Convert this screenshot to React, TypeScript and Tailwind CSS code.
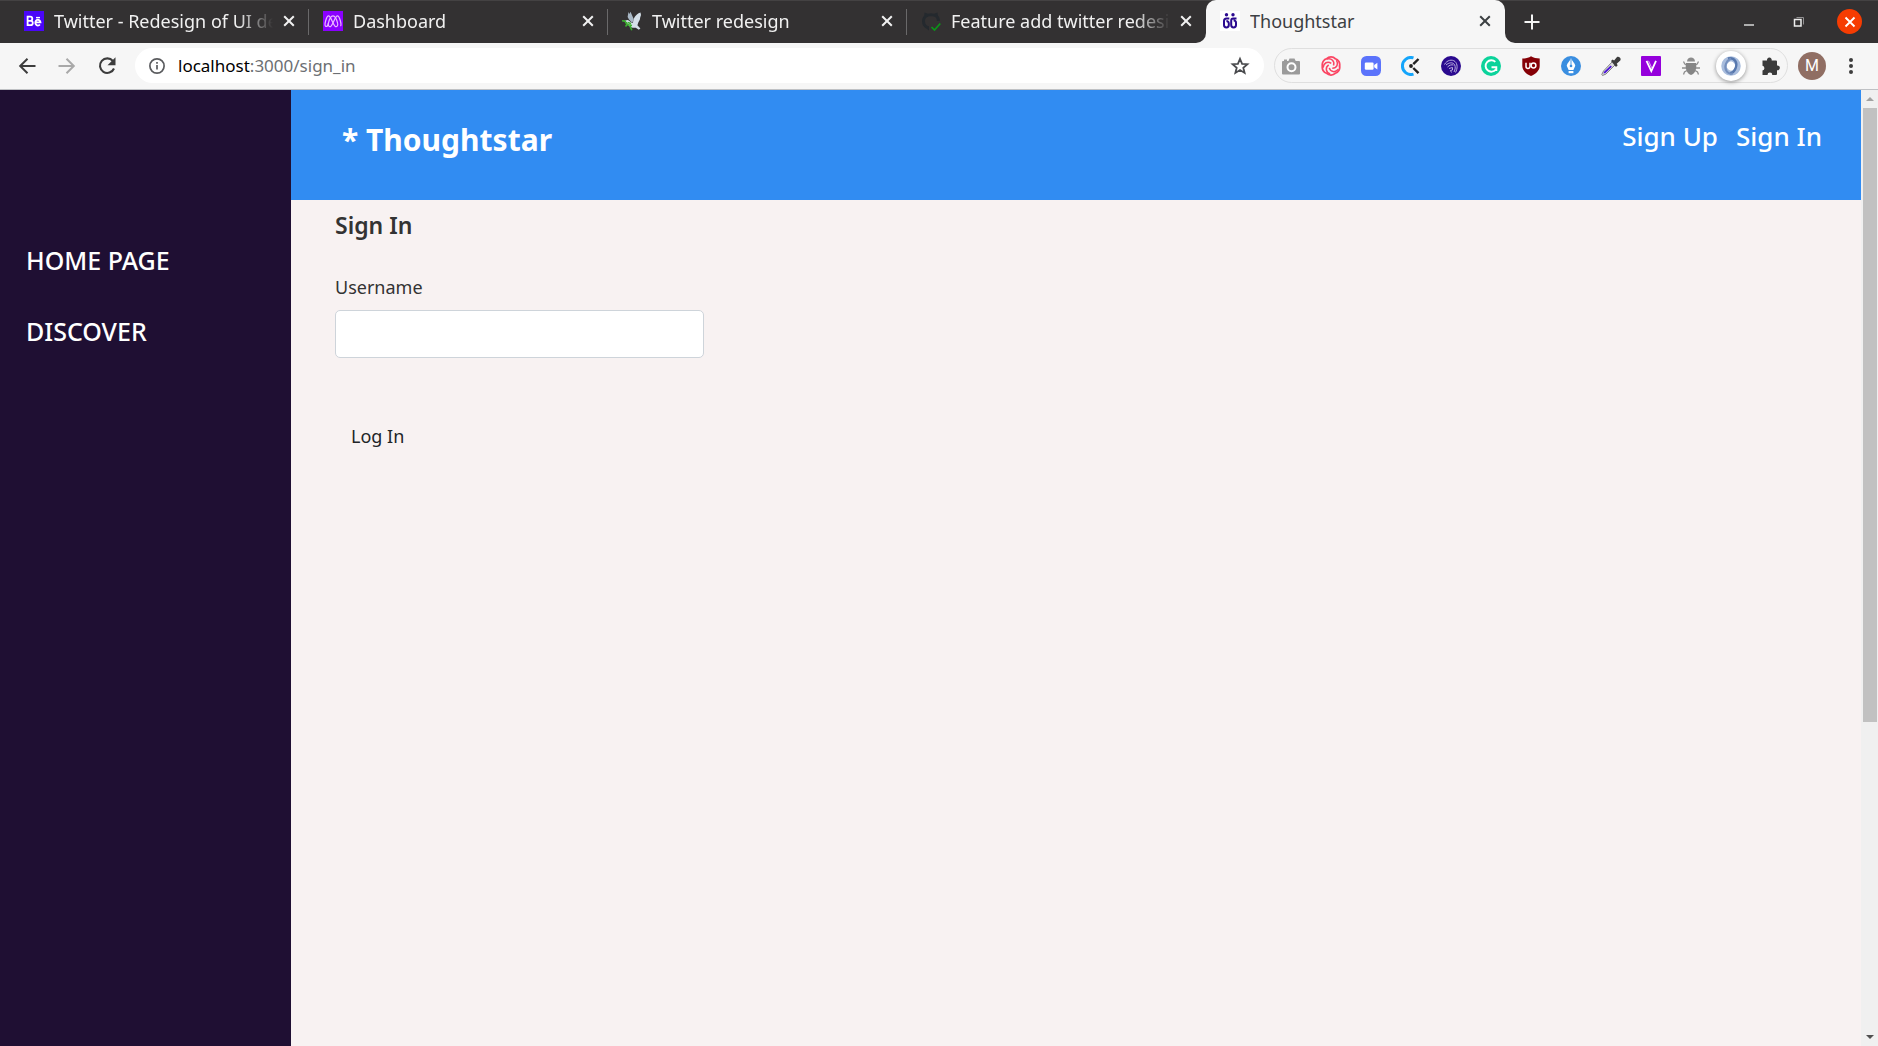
import type { ReactNode } from "react";

function BehanceIcon() {
  return (
    <svg viewBox="0 0 20 20" className="size-5">
      <rect width="20" height="20" fill="#4a06f8" />
      <g fill="none" stroke="#fff" strokeWidth="1.8">
        <path d="M3.6 5.6h2.6a1.9 1.9 0 0 1 0 4.2H3.6zM3.6 9.8h3a2.1 2.1 0 0 1 0 4.4h-3z" />
        <path d="M11.3 11.4h5.2a2.6 2.9 0 1 0-.6 2.1" />
        <path d="M12 6.6h4" strokeWidth="1.4" />
      </g>
    </svg>
  );
}

function DashboardIcon() {
  return (
    <svg viewBox="0 0 20 20" className="size-5">
      <rect width="20" height="20" fill="#8a00ff" />
      <g fill="none" stroke="#e9b8ff" strokeWidth="1.2">
        <path d="M2.5 15.2c-1.4-1.4 1-10.4 3.1-10.4 2 0 4.4 8.300 6.400 10.400 1.600 1.200 3.300-.3 2.600-3C13.900 9.200 12.200 4.800 10 4.800c-2.200 0-4 4.600-4.600 7.400-.6 2.700-1.400 3.800-2.900 3z" />
        <path d="M17.500 15.200c1.400-1.400-1-10.400-3.100-10.400-2 0-4.400 8.300-6.400 10.400-1.600 1.200-3.300-.3-2.600-3" />
      </g>
    </svg>
  );
}

function DoveIcon() {
  return (
    <svg viewBox="0 0 20 20" className="size-5">
      <path d="M6.500 1l1 2 1-2.200 3.200 7.200-1.400 4L7 8.500 5.600 6z" fill="#a9b8c6" />
      <path d="M11 12c.2-4 1.800-8.500 7.500-10.500L19 4l-.8 2.500-.4 2.200-1.400 2.500-1 3 3 3.300-1.600 1.200-3-2C9.500 17.500 6 15 4.800 11.500L2.500 9.800 5.500 9c2 .2 3 3 5.500 3z" fill="#d5e0ea" />
      <g fill="none" stroke="#3bb02e" strokeWidth="1.6">
        <path d="M0 9.800l3 .3 2 3.400 5 1M5 13.500l-1.500 2M7.500 14l2.300 5.200M5.500 11.500l3.500 1" />
      </g>
    </svg>
  );
}

function GithubIcon() {
  return (
    <svg viewBox="0 0 20 20" className="size-5">
      <path d="M6 18C2.500 16.500 1 13.500 1 10.500 1 7.500 2.300 5.500 3.300 4.600L3.500 1.500l3.500 1.300a11 11 0 0 1 6 0l3.500-1.300.4 3.100c1.300 1.300 2 3 2 5.400h-3c0-3.400-2-4.800-5.900-4.800s-6 1.600-6 5c0 3 1.500 4.500 4 5v4.300z" fill="#24292e" />
      <path d="M10.500 16l3 3L19.300 12.500" fill="none" stroke="#0b9618" strokeWidth="1.700" />
    </svg>
  );
}

function ThoughtstarIcon() {
  return (
    <svg viewBox="0 0 20 20" className="size-5">
      <rect width="20" height="20" fill="#fff" />
      <g fill="none" stroke="#2b0a8f" strokeWidth="2">
        <path d="M9.300 7.500H6.500A2.500 2.500 0 0 0 4 10v4a2.400 2.400 0 0 0 4.800 0v-1.500a2.400 2.400 0 0 0-2.400-2.400" />
        <path d="M16.500 7.500h-3.300a2 2 0 0 0-2 2v4.500a2.400 2.400 0 0 0 4.800 0v-2.300a2.200 2.200 0 0 0-2.400-2.200" />
      </g>
      <g fill="#2b0a8f">
        <circle cx="6.500" cy="3.700" r="1.700" />
        <circle cx="13" cy="3.700" r="1.700" />
      </g>
    </svg>
  );
}

function CloseGlyph() {
  return (
    <svg viewBox="0 0 12 12" className="size-3" fill="none" stroke="currentColor" strokeWidth="2">
      <path d="M1.200 1.200l9.600 9.600M10.800 1.200l-9.600 9.600" />
    </svg>
  );
}

type TabProps = { icon: ReactNode; title: string; active?: boolean; divider?: boolean };

function BrowserTab({ icon, title, active, divider }: TabProps) {
  return (
    <div
      className={
        active
          ? "relative flex h-[43px] min-w-0 flex-1 items-center rounded-t-[10px] bg-[#f6f6f6] pl-[14px] pr-2 pb-px text-[#3c4043] max-w-[299px]"
          : "relative flex h-[43px] min-w-0 flex-1 items-center pl-[14px] pr-2 pb-px text-[#f1f1f1] max-w-[299px]"
      }
    >
      <span className="shrink-0">{icon}</span>
      <button
        className={
          active
            ? "ml-[10px] h-7 min-w-0 flex-1 overflow-hidden text-left text-[18px] leading-7 whitespace-nowrap"
            : "ml-[10px] h-7 min-w-0 flex-1 overflow-hidden text-left text-[18px] leading-7 whitespace-nowrap [mask-image:linear-gradient(to_right,#000_84%,transparent)]"
        }
      >
        {title}
      </button>
      <button aria-label={`Close ${title}`} className="ml-1 flex size-6 shrink-0 items-center justify-center">
        <CloseGlyph />
      </button>
      {divider && <span className="absolute right-0 top-[9px] h-[26px] w-px bg-[#6a696a]" />}
      {active && (
        <>
          <span className="absolute bottom-0 right-full size-[10px] bg-[#f6f6f6]">
            <span className="block size-full rounded-br-[10px] bg-[#333132]" />
          </span>
          <span className="absolute bottom-0 left-full size-[10px] bg-[#f6f6f6]">
            <span className="block size-full rounded-bl-[10px] bg-[#333132]" />
          </span>
        </>
      )}
    </div>
  );
}

function TabStrip() {
  return (
    <div className="flex h-[43px] items-center bg-[#333132] pl-[10px] shadow-[inset_0_1px_0_#444243]">
      <div className="flex min-w-0 flex-1">
        <BrowserTab icon={<BehanceIcon />} title="Twitter - Redesign of UI details" divider />
        <BrowserTab icon={<DashboardIcon />} title="Dashboard" divider />
        <BrowserTab icon={<DoveIcon />} title="Twitter redesign" divider />
        <BrowserTab icon={<GithubIcon />} title="Feature add twitter redesign" />
        <BrowserTab icon={<ThoughtstarIcon />} title="Thoughtstar" active />
        <button aria-label="New tab" className="ml-[15px] flex w-6 shrink-0 items-center justify-center text-[#f5f5f5]">
          <svg viewBox="0 0 16 16" className="size-4" fill="none" stroke="currentColor" strokeWidth="2">
            <path d="M8 .5v15M.5 8h15" />
          </svg>
        </button>
      </div>
      <div className="flex shrink-0 items-center gap-[26px] pr-4 text-[#d8d8d8]">
        <button aria-label="Minimize" className="flex size-6 items-center justify-center">
          <svg viewBox="0 0 24 24" className="size-6">
            <path d="M7 15h10" stroke="currentColor" strokeWidth="1.500" />
          </svg>
        </button>
        <button aria-label="Restore" className="flex size-6 items-center justify-center">
          <svg viewBox="0 0 24 24" className="size-6" fill="none">
            <path d="M9.500 7.500h7v7" stroke="#929192" />
            <rect x="7.500" y="9.500" width="6.500" height="6.500" stroke="#eee" strokeWidth="1.500" />
          </svg>
        </button>
        <button aria-label="Close window" className="flex size-[25px] items-center justify-center rounded-full bg-[#f63c02] text-white">
          <svg viewBox="0 0 12 12" className="size-3" fill="none" stroke="currentColor" strokeWidth="1.900">
            <path d="M1.500 1.500l9 9M10.500 1.500l-9 9" />
          </svg>
        </button>
      </div>
    </div>
  );
}

const extensions: { name: string; icon: ReactNode; raised?: boolean }[] = [
  {
    name: "Screenshot",
    icon: (
      <>
        <path d="M3 3.500h3v1.500h1.500l1-2.500h5l1.200 2.500H18a1 1 0 0 1 1 1v11.500a1 1 0 0 1-1 1H2a1 1 0 0 1-1-1V6a1 1 0 0 1 1-1h1z" fill="#9b9b9b" />
        <circle cx="10.500" cy="11.200" r="4" fill="none" stroke="#fff" strokeWidth="2" />
      </>
    ),
  },
  {
    name: "Loom",
    icon: (
      <g fill="none" stroke="#fb4563" strokeWidth="1.800">
        {[0, 60, 120, 180, 240, 300].map((angle) => (
          <path key={angle} d="M5.600 2.800C8 .2 12.200.4 14.400 2.800" transform={`rotate(${angle} 10 10)`} />
        ))}
        {[0, 72, 144, 216, 288].map((angle) => (
          <path key={angle} d="M6 3C10.500 2 14 5 12.500 9.500" transform={`rotate(${angle} 10 10)`} strokeWidth="1.500" />
        ))}
      </g>
    ),
  },
  {
    name: "Zoom",
    icon: (
      <>
        <rect width="20" height="20" rx="5.500" fill="#5b73fb" />
        <rect x="3.800" y="6.500" width="8.800" height="7.200" rx="1.200" fill="#fff" />
        <path d="M13.200 9l3.200-2.300v6.800L13.200 11.200z" fill="#fff" />
      </>
    ),
  },
  {
    name: "Clockify",
    icon: (
      <>
        <path d="M12.500 1.900A8.500 8.500 0 1 0 12.500 18.100" fill="none" stroke="#14a5fb" strokeWidth="3" />
        <circle cx="10" cy="10" r="1.900" fill="#222" />
        <path d="M12.300 8.200l5.200-5.200M12.300 12l5.200 5.200" stroke="#222" strokeWidth="2.400" />
      </>
    ),
  },
  {
    name: "Spartan",
    icon: (
      <>
        <circle cx="10" cy="10" r="10" fill="#2b0a8f" />
        <path d="M3.500 8.500C6 4 11 3 14 5.500c2.700 2.500 2.700 7 .5 11M5 9c3-2.500 6.500-3 8.500-.5 1.200 2.200.8 5-.5 7.500M6.500 11c2-2 4-2.500 6-2M8 12.500l3.500-1v2.500l-2 .5 1 2" fill="none" stroke="#b9aee0" strokeWidth="1" />
      </>
    ),
  },
  {
    name: "Grammarly",
    icon: (
      <>
        <circle cx="10" cy="10" r="10" fill="#0bd39b" />
        <path d="M14.300 5.900A5.700 5.700 0 1 0 14.800 13.500M10.500 11.200h4.800v3.800" fill="none" stroke="#fff" strokeWidth="1.900" />
      </>
    ),
  },
  {
    name: "uBlock Origin",
    icon: (
      <>
        <path d="M10 .3c2.500 1.700 5.500 2.200 8.700 2.200v7.500c0 4.500-4 8-8.700 10-4.700-2-8.700-5.500-8.700-10V2.500C4.500 2.500 7.500 2 10 .3z" fill="#850006" />
        <path d="M5 6.700v3.500a1.700 1.700 0 0 0 4 .5V6.700" fill="none" stroke="#fff" strokeWidth="1.500" />
        <circle cx="12.500" cy="9.500" r="2.400" fill="none" stroke="#fff" strokeWidth="1.500" />
      </>
    ),
  },
  {
    name: "Pen",
    icon: (
      <>
        <circle cx="10" cy="10" r="10" fill="#3a8ee0" />
        <path d="M10 2.200c.8 2.400 4 4.800 4.300 7.500L12.400 14H7.600L5.700 9.700C6 7 9.200 4.600 10 2.200z" fill="#fff" />
        <path d="M7.600 15h4.800v2.200H7.600z" fill="#fff" />
        <path d="M10 3v6.500" stroke="#3a8ee0" strokeWidth=".9" />
        <circle cx="10" cy="10" r="1.300" fill="#3a8ee0" />
      </>
    ),
  },
  {
    name: "Color picker",
    icon: (
      <>
        <path d="M11.500 5.500l3 3L5 18l-3.500 1.500L.8 18.500 2.500 15z" fill="#dcdcdc" stroke="#77777a" strokeWidth=".9" />
        <path d="M9.700 9.500l1.200 1.200L4.500 17l-2 .6.600-1.800z" fill="#4a12d8" />
        <path d="M10 5l1.600-1.600 1.500 1.200L16 1c1.500-1.200 4.700 1 3.300 3.500L15.700 7.700l1 1.600L15 11z" fill="#3d3d3d" />
      </>
    ),
  },
  {
    name: "Vidyard",
    icon: (
      <>
        <rect width="20" height="20" rx="1" fill="#9500dc" />
        <path d="M5.500 4.800l4.800 10.400L15 4.800" fill="none" stroke="#fff" strokeWidth="1.800" />
        <path d="M7.500 4.800l3.200 7" stroke="#e4b5f8" strokeWidth=".9" />
      </>
    ),
  },
  {
    name: "Debugger",
    icon: (
      <>
        <g fill="none" stroke="#8f8f8f" strokeWidth="1.300">
          <path d="M6 9L3.800 8 2.500 5.500M5.500 12H1M6 14.500L3.500 16 2.500 18.500M14 9l2.200-1 1.300-2.500M14.500 12H19M14 14.500l2.500 1.500 1 2.500" />
        </g>
        <path d="M6 5.500C6 3 8 1.500 10 1.500s4 1.500 4 4z" fill="#8c8c8c" />
        <path d="M5 7h10c1 4-.3 11-5 12C5.300 18 4 11 5 7z" fill="#858585" />
      </>
    ),
  },
  {
    name: "JSON Formatter",
    raised: true,
    icon: (
      <>
        <circle cx="10" cy="10" r="7" fill="none" stroke="#a9bddd" strokeWidth="5.500" />
        <path d="M7 2.500C13.500 1 17 6.500 14.500 12.500 13.500 15 11 17 9 17.500" fill="none" stroke="#5878ad" strokeWidth="2.400" />
        <path d="M12 17.500C6 18.500 3 13 5 7.500 6 5 8 3.500 10 2.500" fill="none" stroke="#7590be" strokeWidth="2" />
        <ellipse cx="10" cy="10" rx="3" ry="4.500" fill="#fff" />
      </>
    ),
  },
  {
    name: "Extensions",
    icon: (
      <path d="M1.500 4.500H6a2.400 2.400 0 1 1 4.700 0H15a1 1 0 0 1 1 1v4a2.400 2.400 0 1 1 0 4.700V18a1 1 0 0 1-1 1h-3.700a2.400 2.400 0 0 0-4.800 0H1.500v-4.500a2.400 2.400 0 0 0 0-4.700z" fill="#3b3b3b" />
    ),
  },
];

function Toolbar() {
  return (
    <div className="flex h-[47px] items-center border-b border-[#bfc1c4] bg-[#f6f6f6] pb-px pl-[17px] pr-[17px]">
      <div className="flex items-center gap-5 text-[#3d3d3d]">
        <button aria-label="Back">
          <svg viewBox="0 0 20 20" className="size-5" fill="none" stroke="currentColor" strokeWidth="2">
            <path d="M18.500 10H3.500M10.500 2.700L3.200 10l7.300 7.300" />
          </svg>
        </button>
        <button aria-label="Forward" className="text-[#a9a9a9]">
          <svg viewBox="0 0 20 20" className="size-5" fill="none" stroke="currentColor" strokeWidth="2">
            <path d="M1.500 10h15M9.500 2.700l7.300 7.300-7.300 7.300" />
          </svg>
        </button>
        <button aria-label="Reload">
          <svg viewBox="0 0 20 20" className="size-5">
            <path d="M15.900 5A7.300 7.300 0 1 0 17 12.500" fill="none" stroke="currentColor" strokeWidth="2.100" />
            <path d="M18.500 1.300v8h-8z" fill="currentColor" />
          </svg>
        </button>
      </div>
      <div className="ml-[18px] flex h-[35px] min-w-0 flex-1 items-center rounded-full bg-white pl-[14px] pr-[14px]">
        <button aria-label="Site information" className="shrink-0">
          <svg viewBox="0 0 18 18" className="size-4" fill="none" stroke="#5a5b5e" strokeWidth="1.900">
            <circle cx="9" cy="9" r="8" />
            <path d="M9 8v5M9 4.500v2" />
          </svg>
        </button>
        <button aria-label="Address bar" className="ml-[13px] min-w-0 flex-1 text-left text-[17px] leading-6 text-[#6c6f73]">
          <span className="text-black">localhost</span>:3000/sign_in
        </button>
        <button aria-label="Bookmark this page" className="shrink-0">
          <svg viewBox="0 0 20 20" className="size-5" fill="none" stroke="#4a4b4e" strokeWidth="1.800">
            <path d="M10 2.800l2.100 5 5.300.4-4.100 3.500 1.300 5.200L10 14.100 5.400 16.900l1.300-5.200L2.600 8.200l5.300-.4z" />
          </svg>
        </button>
      </div>
      <div className="ml-[10px] flex h-[35px] shrink-0 items-center gap-5 rounded-full border border-[#dfdfdf] px-[6px]">
        {extensions.map((ext) => (
          <button
            key={ext.name}
            aria-label={ext.name}
            className={
              ext.raised
                ? "-m-[5px] rounded-full bg-white p-[5px] shadow-[0_1px_4px_rgba(0,0,0,0.4)]"
                : "rounded-sm"
            }
          >
            <svg viewBox="0 0 20 20" className="size-5">
              {ext.icon}
            </svg>
          </button>
        ))}
      </div>
      <button aria-label="Profile" className="ml-[10px] size-7 shrink-0 rounded-full bg-[#906e63] font-['Roboto',sans-serif] text-[16px] leading-7 text-white">
        M
      </button>
      <button aria-label="Menu" className="ml-[15px] shrink-0">
        <svg viewBox="0 0 20 20" className="size-5" fill="#3d3d3d">
          <circle cx="10" cy="4" r="2" />
          <circle cx="10" cy="10" r="2" />
          <circle cx="10" cy="16" r="2" />
        </svg>
      </button>
    </div>
  );
}

function Scrollbar() {
  return (
    <div className="flex w-[17px] shrink-0 flex-col items-center bg-[#f0f0f0] px-px">
      <div className="flex h-[18px] shrink-0 items-center">
        <svg viewBox="0 0 8 4" className="h-1 w-2">
          <path d="M0 4l4-4 4 4z" fill="#a2a2a2" />
        </svg>
      </div>
      <div className="w-[14px] flex-[614] bg-[#c1c1c1]" />
      <div className="flex-[306]" />
      <div className="flex h-[18px] shrink-0 items-center">
        <svg viewBox="0 0 8 4" className="h-1 w-2">
          <path d="M0 0l4 4 4-4z" fill="#505050" />
        </svg>
      </div>
    </div>
  );
}

export default function App() {
  return (
    <div className="flex h-screen flex-col overflow-hidden font-['Noto_Sans',sans-serif]">
      <TabStrip />
      <Toolbar />
      <div className="flex min-h-0 flex-1">
        <nav className="flex w-[291px] shrink-0 flex-col bg-[#1f0f33] pt-[135px] text-[25px] leading-[71px] font-medium text-white">
          <a href="#home" className="px-[26px]">HOME PAGE</a>
          <a href="#discover" className="px-[26px]">DISCOVER</a>
        </nav>
        <div className="flex min-w-0 flex-1 flex-col bg-[#f8f2f2]">
          <header className="flex h-[110px] shrink-0 items-start justify-between bg-[#318cf2] pr-[39px] pl-[51px] text-white">
            <a href="#top" className="mt-[26px] text-[30px] leading-[48px] font-bold">* Thoughtstar</a>
            <div className="mt-[26px] flex gap-[18px] text-[26px] leading-10 font-medium">
              <a href="#sign-up">Sign Up</a>
              <a href="#sign-in">Sign In</a>
            </div>
          </header>
          <main className="px-11 pt-[9px] text-[#333]">
            <h1 className="text-[23px] leading-8 font-semibold">Sign In</h1>
            <form className="mt-8 flex flex-col items-start">
              <label htmlFor="username" className="text-[18px] leading-7">Username</label>
              <input
                id="username"
                type="text"
                className="mt-[9px] h-12 w-[369px] rounded-[5px] border border-[#ced4da] bg-white px-4 text-[18px] outline-none"
              />
              <button type="button" className="mt-[54px] h-12 px-4 text-[18px] text-[#212529]">
                Log In
              </button>
            </form>
          </main>
        </div>
        <Scrollbar />
      </div>
    </div>
  );
}
